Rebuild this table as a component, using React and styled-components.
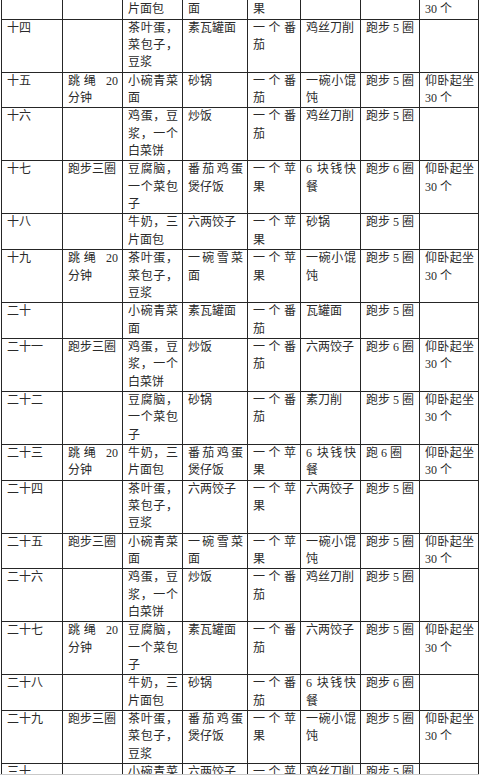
import React from "react";
import styled, { createGlobalStyle } from "styled-components";

const GlobalStyle = createGlobalStyle`
  html, body {
    margin: 0;
    padding: 0;
    background: #ffffff;
  }
  body {
    font-family: "Liberation Serif", "Noto Sans CJK SC", serif;
  }
`;

const Viewport = styled.div`
  height: 775px;
  overflow: hidden;
  padding-left: 1px;
  border-bottom: 1px solid #c9c9c9;
  box-sizing: border-box;
`;

const Sheet = styled.table`
  margin-top: -17px;
  width: 477px;
  border-collapse: collapse;
  table-layout: fixed;
  color: #2a2a2a;
  font-size: 12px;
  line-height: 17.35px;
`;

const Col = styled.col`
  width: ${(p) => p.$w}px;
`;

const Cell = styled.td`
  border: 1px solid #262626;
  padding: 0 4px 0 5px;
  vertical-align: top;
  text-align: justify;
  text-justify: inter-character;
  word-break: normal;
  overflow-wrap: normal;
`;

const widths = [61, 60, 60, 65, 53, 60, 59, 59];

const rows = [
  ["十三", "跑步三圈", "牛奶，三片面包", "一碗雪菜面", "一个苹果", "砂锅", "跑步 5 圈", "仰卧起坐 30 个"],
  ["十四", "", "茶叶蛋，菜包子，豆浆", "素瓦罐面", "一个番茄", "鸡丝刀削", "跑步 5 圈", ""],
  ["十五", "跳绳 20 分钟", "小碗青菜面", "砂锅", "一个番茄", "一碗小馄饨", "跑步 5 圈", "仰卧起坐 30 个"],
  ["十六", "", "鸡蛋，豆浆，一个白菜饼", "炒饭", "一个番茄", "鸡丝刀削", "跑步 5 圈", ""],
  ["十七", "跑步三圈", "豆腐脑，一个菜包子", "番茄鸡蛋煲仔饭", "一个苹果", "6 块钱快餐", "跑步 6 圈", "仰卧起坐 30 个"],
  ["十八", "", "牛奶，三片面包", "六两饺子", "一个苹果", "砂锅", "跑步 5 圈", ""],
  ["十九", "跳绳 20 分钟", "茶叶蛋，菜包子，豆浆", "一碗雪菜面", "一个苹果", "一碗小馄饨", "跑步 5 圈", "仰卧起坐 30 个"],
  ["二十", "", "小碗青菜面", "素瓦罐面", "一个番茄", "瓦罐面", "跑步 5 圈", ""],
  ["二十一", "跑步三圈", "鸡蛋，豆浆，一个白菜饼", "炒饭", "一个番茄", "六两饺子", "跑步 6 圈", "仰卧起坐 30 个"],
  ["二十二", "", "豆腐脑，一个菜包子", "砂锅", "一个番茄", "素刀削", "跑步 5 圈", "仰卧起坐 30 个"],
  ["二十三", "跳绳 20 分钟", "牛奶，三片面包", "番茄鸡蛋煲仔饭", "一个苹果", "6 块钱快餐", "跑 6 圈", "仰卧起坐 30 个"],
  ["二十四", "", "茶叶蛋，菜包子，豆浆", "六两饺子", "一个苹果", "六两饺子", "跑步 5 圈", ""],
  ["二十五", "跑步三圈", "小碗青菜面", "一碗雪菜面", "一个苹果", "一碗小馄饨", "跑步 5 圈", "仰卧起坐 30 个"],
  ["二十六", "", "鸡蛋，豆浆，一个白菜饼", "炒饭", "一个番茄", "鸡丝刀削", "跑步 5 圈", ""],
  ["二十七", "跳绳 20 分钟", "豆腐脑，一个菜包子", "素瓦罐面", "一个番茄", "六两饺子", "跑步 5 圈", "仰卧起坐 30 个"],
  ["二十八", "", "牛奶，三片面包", "砂锅", "一个番茄", "6 块钱快餐", "跑步 6 圈", ""],
  ["二十九", "跑步三圈", "茶叶蛋，菜包子，豆浆", "番茄鸡蛋煲仔饭", "一个苹果", "一碗小馄饨", "跑步 5 圈", "仰卧起坐 30 个"],
  ["三十", "", "小碗青菜面", "六两饺子", "一个苹果", "鸡丝刀削", "跑步 5 圈", ""],
];

export default function App() {
  return (
    <>
      <GlobalStyle />
      <Viewport>
        <Sheet>
          <colgroup>
            {widths.map((w, i) => (
              <Col key={i} $w={w} />
            ))}
          </colgroup>
          <tbody>
            {rows.map((r, i) => (
              <tr key={i}>
                {r.map((c, j) => (
                  <Cell key={j}>{c}</Cell>
                ))}
              </tr>
            ))}
          </tbody>
        </Sheet>
      </Viewport>
    </>
  );
}
